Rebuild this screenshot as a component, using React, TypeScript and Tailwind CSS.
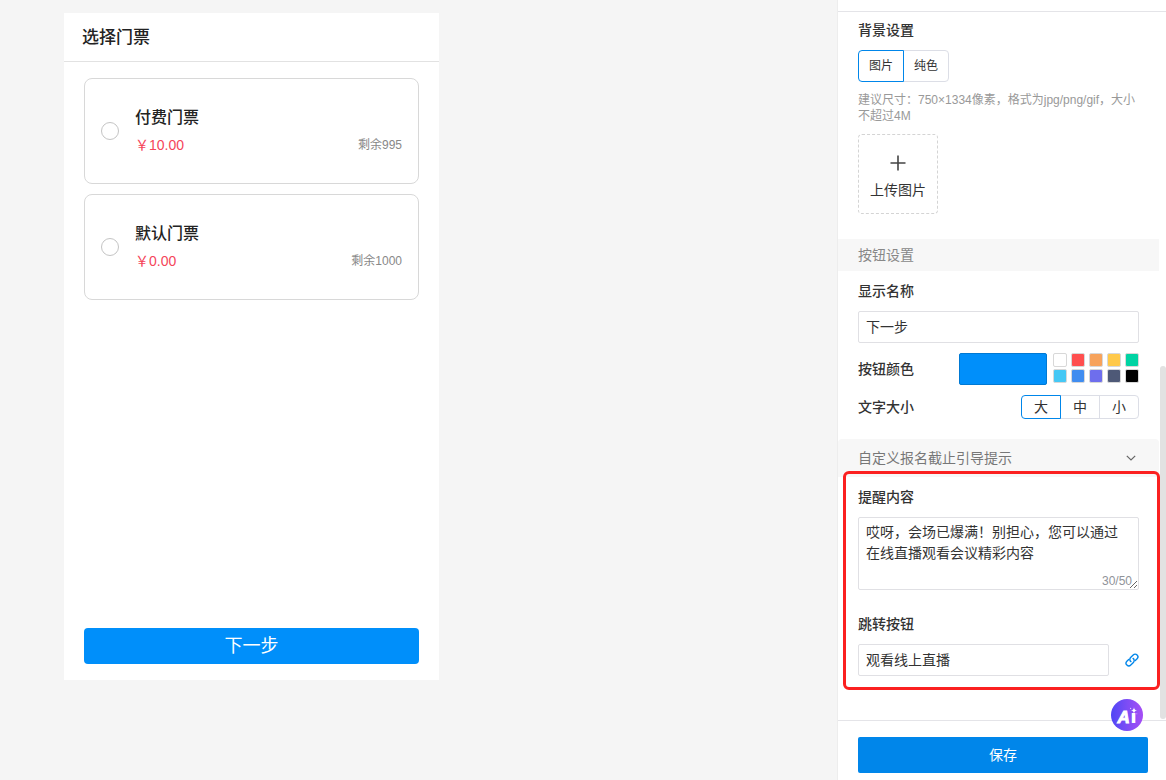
import { useState, type ReactNode } from "react";

type Ticket = { id: string; name: string; price: string; left: number };

const tickets: Ticket[] = [
  { id: "paid", name: "付费门票", price: "￥10.00", left: 995 },
  { id: "default", name: "默认门票", price: "￥0.00", left: 1000 },
];

const swatches = [
  { name: "白色", value: "#ffffff", cls: "bg-white" },
  { name: "红色", value: "#ff4f4f", cls: "bg-[#ff4f4f]" },
  { name: "橙色", value: "#f7a35c", cls: "bg-[#f7a35c]" },
  { name: "黄色", value: "#ffc94a", cls: "bg-[#ffc94a]" },
  { name: "绿色", value: "#00d3a3", cls: "bg-[#00d3a3]" },
  { name: "浅蓝", value: "#45c8f5", cls: "bg-[#45c8f5]" },
  { name: "蓝色", value: "#418df0", cls: "bg-[#418df0]" },
  { name: "紫色", value: "#6e6eed", cls: "bg-[#6e6eed]" },
  { name: "灰蓝", value: "#4e5977", cls: "bg-[#4e5977]" },
  { name: "黑色", value: "#000000", cls: "bg-black" },
];

function TicketCard({ ticket }: { ticket: Ticket }) {
  return (
    <label className="flex h-[106px] items-center gap-4 rounded-lg border border-[#d8d8d8] px-4">
      <input
        type="radio"
        name="ticket"
        className="size-[18px] shrink-0 appearance-none rounded-full border border-[#c4c4c4] bg-white checked:border-[5px] checked:border-[#008ffa]"
      />
      <span className="flex flex-1 flex-col gap-[2px]">
        <span className="text-base leading-[26px] font-medium text-[#222]">{ticket.name}</span>
        <span className="flex items-center justify-between">
          <span className="text-sm leading-6 text-[#f5455a]">{ticket.price}</span>
          <span className="text-xs leading-6 text-[#888]">剩余{ticket.left}</span>
        </span>
      </span>
    </label>
  );
}

function FieldTitle({ children, htmlFor }: { children: ReactNode; htmlFor?: string }) {
  const cls = "block text-sm leading-5 font-medium text-[#333]";
  return htmlFor ? (
    <label htmlFor={htmlFor} className={cls}>
      {children}
    </label>
  ) : (
    <h3 className={cls}>{children}</h3>
  );
}

function Segmented({
  label,
  options,
  itemClass,
}: {
  label: string;
  options: string[];
  itemClass: string;
}) {
  const [active, setActive] = useState(0);
  return (
    <div role="group" aria-label={label} className="flex">
      {options.map((option, i) => (
        <button
          key={option}
          type="button"
          aria-pressed={i === active}
          onClick={() => setActive(i)}
          className={`-ml-px border text-[#333] first:ml-0 first:rounded-l last:rounded-r ${itemClass} ${
            i === active ? "z-10 border-[#0086ea]" : "border-[#dcdee6]"
          }`}
        >
          {option}
        </button>
      ))}
    </div>
  );
}

function PlusIcon() {
  return (
    <svg width="16" height="16" viewBox="0 0 16 16" fill="none" stroke="#444" strokeWidth="1.6" aria-hidden="true">
      <path d="M8 0.5v15M0.5 8h15" />
    </svg>
  );
}

function ChevronIcon() {
  return (
    <svg width="10" height="6" viewBox="0 0 10 6" fill="none" stroke="#666" strokeWidth="1.2" aria-hidden="true">
      <path d="M0.8 0.8 5 5l4.200-4.200" />
    </svg>
  );
}

function LinkIcon() {
  return (
    <svg width="14" height="14" viewBox="0 0 14 14" fill="none" stroke="#0086ea" strokeWidth="1.35" strokeLinecap="round" aria-hidden="true">
      <path d="M5.900 8.600a2.700 2.700 0 0 1-.3-4.100l2.600-2.600a2.750 2.750 0 0 1 3.900 3.900L10.300 7.600" />
      <path d="M8.100 5.400a2.700 2.700 0 0 1 .3 4.100l-2.600 2.600a2.750 2.750 0 0 1-3.900-3.900L3.700 6.400" />
    </svg>
  );
}

function AiButton() {
  return (
    <button
      type="button"
      aria-label="Ai"
      className="absolute -top-[22px] right-[23px] size-8 rounded-full bg-linear-to-r from-[#4f46f5] to-[#a64df5]"
    >
      <svg width="32" height="32" viewBox="0 0 32 32" fill="#fff" aria-hidden="true">
        <text
          x="6.500"
          y="23.700"
          fontFamily="'Liberation Sans', sans-serif"
          fontSize="17"
          fontWeight="700"
          fontStyle="italic"
          stroke="#fff"
          strokeWidth="1"
        >
          A
        </text>
        <text x="20" y="24" fontFamily="Inter, sans-serif" fontSize="17" fontWeight="900">
          ı
        </text>
        <path d="M23 8.200c.4 2.300.9 2.900 3.200 3.300-2.300.4-2.800.9-3.200 3.200-.4-2.300-.9-2.800-3.200-3.200 2.300-.4 2.800-1 3.200-3.300Z" />
        <circle cx="19.600" cy="9.400" r="0.600" opacity="0.700" />
        <circle cx="25.800" cy="14.800" r="0.500" opacity="0.600" />
      </svg>
    </button>
  );
}

export default function App() {
  const [message, setMessage] = useState("哎呀，会场已爆满！别担心，您可以通过在线直播观看会议精彩内容");
  const [color, setColor] = useState("#008ffa");

  return (
    <div className="flex h-screen min-h-[780px] bg-[#f5f5f5] font-['Liberation_Sans','Noto_Sans_CJK_SC',sans-serif]">
      <main className="flex-1 px-16 pt-[13px]">
        <section className="flex min-h-[667px] w-[375px] flex-col bg-white">
          <h2 className="border-b border-[#e2e2e2] px-[18px] pt-[13px] pb-[11px] text-[17px] leading-6 font-medium text-[#222]">
            选择门票
          </h2>
          <div className="flex flex-1 flex-col gap-[10px] px-5 pt-4">
            {tickets.map((t) => (
              <TicketCard key={t.id} ticket={t} />
            ))}
          </div>
          <div className="px-5 pb-4">
            <button
              type="button"
              className="h-9 w-full rounded text-lg leading-9 text-white"
              style={{ backgroundColor: color }}
            >
              下一步
            </button>
          </div>
        </section>
      </main>

      <aside className="flex w-[329px] shrink-0 flex-col border-l border-[#ededed] bg-white">
        <div className="h-3 shrink-0 border-b border-[#e4e4e8]" />

        <div className="flex min-h-0 flex-1 gap-px">
          <div className="min-w-0 flex-1">
            <section className="px-5 pt-2">
              <FieldTitle>背景设置</FieldTitle>
              <div className="mt-[10px]">
                <Segmented label="背景设置" options={["图片", "纯色"]} itemClass="h-8 w-[46px] text-xs" />
              </div>
              <p className="mt-[10px] text-xs leading-4 text-[#999]">
                建议尺寸：750×1334像素，格式为jpg/png/gif，大小不超过4M
              </p>
              <button
                type="button"
                className="mt-[10px] flex size-20 flex-col items-center justify-center gap-[9px] rounded border border-dashed border-[#d4d4d4] pt-[7px] text-sm leading-5 text-[#333]"
              >
                <PlusIcon />
                上传图片
              </button>
            </section>

            <h2 className="mt-[25px] bg-[#f7f7f7] px-5 text-sm leading-8 text-[#888]">按钮设置</h2>
            <section className="flex flex-col gap-[10px] px-5 pt-[10px]">
              <FieldTitle htmlFor="display-name">显示名称</FieldTitle>
              <input
                id="display-name"
                type="text"
                defaultValue="下一步"
                className="h-8 w-full rounded-xs border border-[#e0e0e4] px-[7px] pb-[2px] text-sm text-[#333]"
              />
              <div className="flex items-center justify-between">
                <FieldTitle>按钮颜色</FieldTitle>
                <div className="flex items-start gap-[6px]">
                  <button
                    type="button"
                    aria-label="当前颜色"
                    className="h-8 w-[88px] rounded-xs border border-[#0079d3]"
                    style={{ backgroundColor: color }}
                  />
                  <div className="grid grid-cols-5 gap-x-1 gap-y-[2px]">
                    {swatches.map((s) => (
                      <button
                        key={s.value}
                        type="button"
                        aria-label={s.name}
                        onClick={() => setColor(s.value)}
                        className={`size-[14px] rounded-xs border border-[#d8d8d8] ${s.cls}`}
                      />
                    ))}
                  </div>
                </div>
              </div>
              <div className="flex items-center justify-between">
                <FieldTitle>文字大小</FieldTitle>
                <Segmented label="文字大小" options={["大", "中", "小"]} itemClass="h-6 w-10 text-sm leading-5" />
              </div>
            </section>

            <button
              type="button"
              aria-expanded="true"
              className="mt-5 flex h-[38px] w-full items-center justify-between rounded-t bg-[#f7f7f7] pr-[23px] pl-5 text-sm text-[#777]"
            >
              自定义报名截止引导提示
              <ChevronIcon />
            </button>
            <section className="relative px-5 pt-[10px] pb-[14px]">
              <div className="pointer-events-none absolute -top-[6px] -right-px bottom-0 left-[5px] rounded-md border-3 border-[#fb2020]" />
              <FieldTitle htmlFor="message">提醒内容</FieldTitle>
              <div className="relative mt-[10px]">
                <textarea
                  id="message"
                  maxLength={50}
                  value={message}
                  onChange={(e) => setMessage(e.target.value)}
                  className="block h-[73px] w-full resize-y rounded-xs border border-[#e0e0e4] px-[7px] py-1 text-sm leading-[21px] text-[#333]"
                />
                <span className="pointer-events-none absolute right-[7px] bottom-[1px] text-xs leading-4 text-[#909399]">
                  {message.length}/50
                </span>
              </div>
              <div className="mt-6">
                <FieldTitle htmlFor="jump-label">跳转按钮</FieldTitle>
              </div>
              <div className="mt-[10px] flex items-center justify-between gap-4">
                <input
                  id="jump-label"
                  type="text"
                  defaultValue="观看线上直播"
                  className="h-8 min-w-0 flex-1 rounded-xs border border-[#e0e0e4] px-[7px] pb-[2px] text-sm text-[#333]"
                />
                <button type="button" aria-label="设置链接">
                  <LinkIcon />
                </button>
              </div>
            </section>
          </div>
          <div className="flex w-[6px] shrink-0 flex-col justify-end pb-px">
            <div className="h-1/2 rounded-full bg-[#e2e2e2]" />
          </div>
        </div>

        <footer className="relative shrink-0 border-t border-[#e4e4e8] pt-4 pr-[18px] pb-[7px] pl-5">
          <button type="button" className="block h-9 w-full rounded-xs bg-[#0086ea] text-sm text-white">
            保存
          </button>
          <AiButton />
        </footer>
      </aside>
    </div>
  );
}
